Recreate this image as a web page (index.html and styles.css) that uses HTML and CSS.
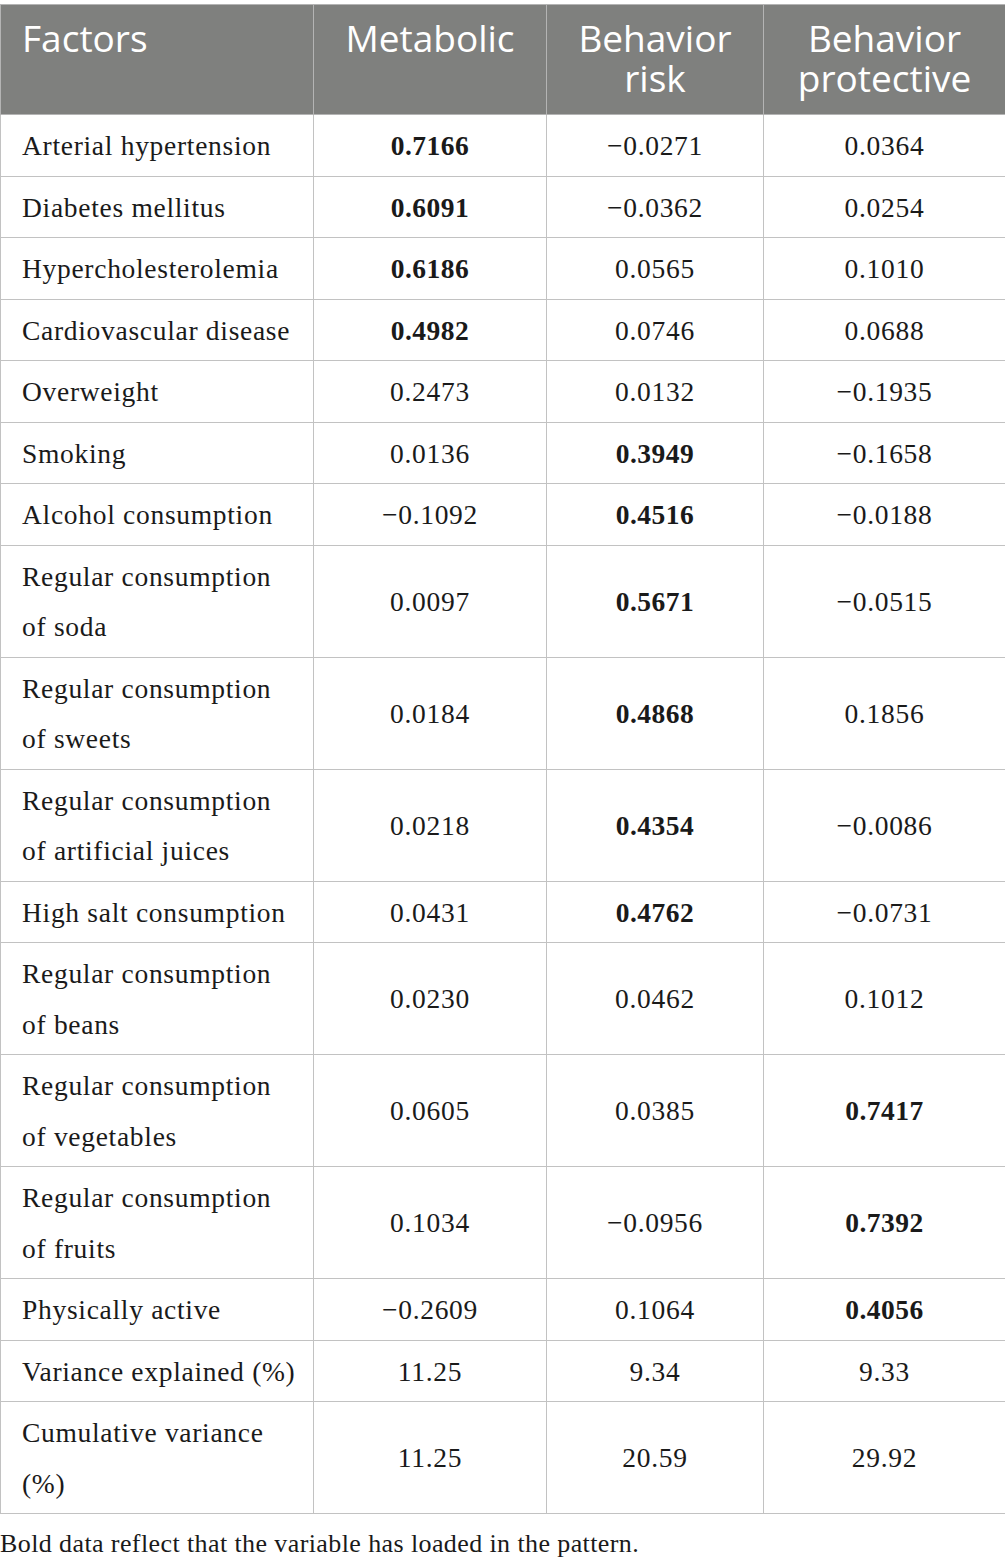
FILE: index.html
```html
<!DOCTYPE html>
<html>
<head>
<meta charset="utf-8">
<link rel="stylesheet" href="styles.css">
</head>
<body>
<table class="tbl">
<colgroup>
<col class="c1"><col class="c2"><col class="c3"><col class="c4">
</colgroup>
<thead>
<tr><th class="left">Factors</th><th>Metabolic</th><th>Behavior<br>risk</th><th>Behavior<br>protective</th></tr>
</thead>
<tbody>
<tr><td class="left">Arterial hypertension</td><td><b>0.7166</b></td><td>−0.0271</td><td>0.0364</td></tr>
<tr><td class="left">Diabetes mellitus</td><td><b>0.6091</b></td><td>−0.0362</td><td>0.0254</td></tr>
<tr><td class="left">Hypercholesterolemia</td><td><b>0.6186</b></td><td>0.0565</td><td>0.1010</td></tr>
<tr><td class="left">Cardiovascular disease</td><td><b>0.4982</b></td><td>0.0746</td><td>0.0688</td></tr>
<tr><td class="left">Overweight</td><td>0.2473</td><td>0.0132</td><td>−0.1935</td></tr>
<tr><td class="left">Smoking</td><td>0.0136</td><td><b>0.3949</b></td><td>−0.1658</td></tr>
<tr><td class="left">Alcohol consumption</td><td>−0.1092</td><td><b>0.4516</b></td><td>−0.0188</td></tr>
<tr><td class="left">Regular consumption<br>of soda</td><td>0.0097</td><td><b>0.5671</b></td><td>−0.0515</td></tr>
<tr><td class="left">Regular consumption<br>of sweets</td><td>0.0184</td><td><b>0.4868</b></td><td>0.1856</td></tr>
<tr><td class="left">Regular consumption<br>of artificial juices</td><td>0.0218</td><td><b>0.4354</b></td><td>−0.0086</td></tr>
<tr><td class="left">High salt consumption</td><td>0.0431</td><td><b>0.4762</b></td><td>−0.0731</td></tr>
<tr><td class="left">Regular consumption<br>of beans</td><td>0.0230</td><td>0.0462</td><td>0.1012</td></tr>
<tr><td class="left">Regular consumption<br>of vegetables</td><td>0.0605</td><td>0.0385</td><td><b>0.7417</b></td></tr>
<tr><td class="left">Regular consumption<br>of fruits</td><td>0.1034</td><td>−0.0956</td><td><b>0.7392</b></td></tr>
<tr><td class="left">Physically active</td><td>−0.2609</td><td>0.1064</td><td><b>0.4056</b></td></tr>
<tr><td class="left">Variance explained (%)</td><td>11.25</td><td>9.34</td><td>9.33</td></tr>
<tr><td class="left">Cumulative variance<br>(%)</td><td>11.25</td><td>20.59</td><td>29.92</td></tr>
</tbody>
</table>
<p class="note">Bold data reflect that the variable has loaded in the pattern.</p>
</body>
</html>
```

FILE: styles.css
```css
html, body {
  margin: 0;
  padding: 0;
  background: #ffffff;
}
body {
  padding-top: 4px;
  color: #1a1a1a;
}
.tbl {
  width: 1005px;
  border-collapse: collapse;
  table-layout: fixed;
}
.c1 { width: 313px; }
.c2 { width: 233px; }
.c3 { width: 217px; }
.c4 { width: 242px; }
.tbl th {
  background: #7f807e;
  color: #ffffff;
  font-family: "Open Sans", "Noto Sans", sans-serif;
  font-weight: 400;
  font-size: 37px;
  line-height: 40px;
  text-align: center;
  vertical-align: top;
  padding: 13px 6px 16px;
  border: 1.5px solid #b4b4b4;
  height: 80px;
}
.tbl th.left {
  text-align: left;
  padding-left: 21px;
}
.tbl td {
  font-family: "Liberation Serif", "Times New Roman", serif;
  font-size: 27.5px;
  letter-spacing: 0.7px;
  line-height: 50.5px;
  text-align: center;
  vertical-align: middle;
  padding: 6px 10px 4px;
  border: 1.5px solid #c2c2c2;
  color: #1a1a1a;
}
.tbl td.left {
  text-align: left;
  padding-left: 21px;
}
.tbl td b {
  font-weight: 700;
  letter-spacing: 0.5px;
}
.note {
  margin: 15px 0 0 0;
  font-family: "Liberation Serif", "Times New Roman", serif;
  font-size: 26px;
  letter-spacing: 0.4px;
  line-height: 30px;
  color: #1a1a1a;
}
```
